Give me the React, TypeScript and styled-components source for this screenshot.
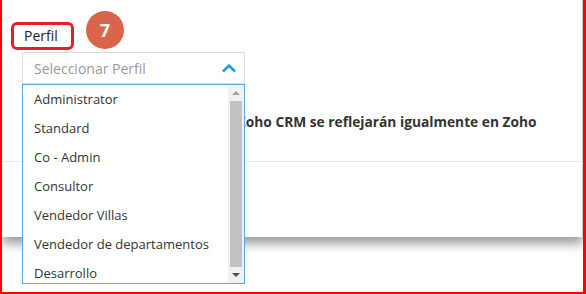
import React from 'react';
import styled, { createGlobalStyle } from 'styled-components';

const GlobalStyle = createGlobalStyle`
  html, body {
    margin: 0;
    padding: 0;
    background: #ffffff;
    font-family: "Open Sans", "Liberation Sans", sans-serif;
  }
`;

const Frame = styled.div`
  width: 586px;
  height: 294px;
  box-sizing: border-box;
  border-left: 2px solid #ff0000;
  border-right: 3px solid #ff0000;
  border-bottom: 2px solid #ff0000;
  background: #ffffff;
  overflow: hidden;
`;

const Card = styled.div`
  height: 237px;
  display: flex;
  flex-direction: column;
  background: #ffffff;
  border-right: 1px solid #c8c8c8;
  box-shadow: 0 7px 10px rgba(0, 0, 0, 0.38);
`;

const Body = styled.div`
  height: 162px;
  box-sizing: border-box;
  padding: 22px 0 0 9px;
  border-bottom: 1px solid #e8e8e8;
`;

const LabelRow = styled.div`
  display: flex;
  align-items: center;
  position: relative;
  height: 28px;
`;

const Highlight = styled.div`
  box-sizing: border-box;
  height: 28px;
  padding: 0 10px 0 10px;
  width: 63px;
  display: flex;
  align-items: center;
  border: 3px solid #e41e2b;
  border-radius: 6px;
  font-size: 14px;
  color: #222;
  line-height: 1;
`;

const StepBadge = styled.div`
  position: absolute;
  left: 75px;
  top: -11px;
  width: 38px;
  height: 38px;
  border-radius: 50%;
  background: #d9654a;
  color: #fff;
  font-weight: 700;
  font-size: 18px;
  display: flex;
  align-items: center;
  justify-content: center;
`;

const SelectWrap = styled.div`
  position: relative;
  width: 223px;
  margin: 2px 0 0 11px;
`;

const SelectBox = styled.div`
  box-sizing: border-box;
  height: 32px;
  border: 1px solid #dcdcdc;
  display: flex;
  align-items: center;
  justify-content: space-between;
  padding: 0 7px 0 11px;
  font-size: 14px;
  color: #999;
`;

const Menu = styled.div`
  position: absolute;
  top: 100%;
  left: 0;
  width: 223px;
  height: 200px;
  box-sizing: border-box;
  border: 1px solid #5aa8e6;
  background: #fff;
  display: flex;
  z-index: 2;
`;

const List = styled.ul`
  flex: 1;
  list-style: none;
  margin: 0;
  padding: 0;
  overflow: hidden;
`;

const Item = styled.li`
  height: 29px;
  line-height: 28px;
  padding-left: 11px;
  font-size: 13px;
  color: #333;
  white-space: nowrap;
`;

const Track = styled.div`
  width: 16px;
  background: #f1f1f1;
  display: flex;
  flex-direction: column;
  align-items: center;
`;

const Arrow = styled.div<{ $down?: boolean; $color: string }>`
  height: 16px;
  display: flex;
  align-items: center;
  justify-content: center;
  &::before {
    content: '';
    border-left: 4px solid transparent;
    border-right: 4px solid transparent;
    ${({ $down, $color }) =>
      $down ? `border-top: 4px solid ${$color};` : `border-bottom: 4px solid ${$color};`}
  }
`;

const Thumb = styled.div`
  width: 12px;
  flex: 1;
  background: #c1c1c1;
`;

const Notice = styled.p`
  margin: 29px 0 0 45px;
  width: 492px;
  font-size: 13.75px;
  line-height: 18px;
  font-weight: 700;
  color: #333;
`;

const Footer = styled.div`
  flex: 1;
`;

const ChevronUp = () => (
  <svg width="16" height="10" viewBox="0 0 16 10">
    <path d="M2 8.5 L8 2.5 L14 8.5" fill="none" stroke="#1e9be6" strokeWidth="2.6" />
  </svg>
);

const profiles = [
  'Administrator',
  'Standard',
  'Co - Admin',
  'Consultor',
  'Vendedor Villas',
  'Vendedor de departamentos',
  'Desarrollo',
];

export default function App() {
  return (
    <>
      <GlobalStyle />
      <Frame>
        <Card>
          <Body>
            <LabelRow>
              <Highlight>Perfil</Highlight>
              <StepBadge>7</StepBadge>
            </LabelRow>
            <SelectWrap>
              <SelectBox>
                <span>Seleccionar Perfil</span>
                <ChevronUp />
              </SelectBox>
              <Menu>
                <List>
                  {profiles.map((p) => (
                    <Item key={p}>{p}</Item>
                  ))}
                </List>
                <Track>
                  <Arrow $color="#a3a3a3" />
                  <Thumb />
                  <Arrow $down $color="#505050" />
                </Track>
              </Menu>
            </SelectWrap>
            <Notice>
              Los cambios realizados en Zoho CRM se reflejarán igualmente en Zoho Desk.
            </Notice>
          </Body>
          <Footer />
        </Card>
      </Frame>
    </>
  );
}
